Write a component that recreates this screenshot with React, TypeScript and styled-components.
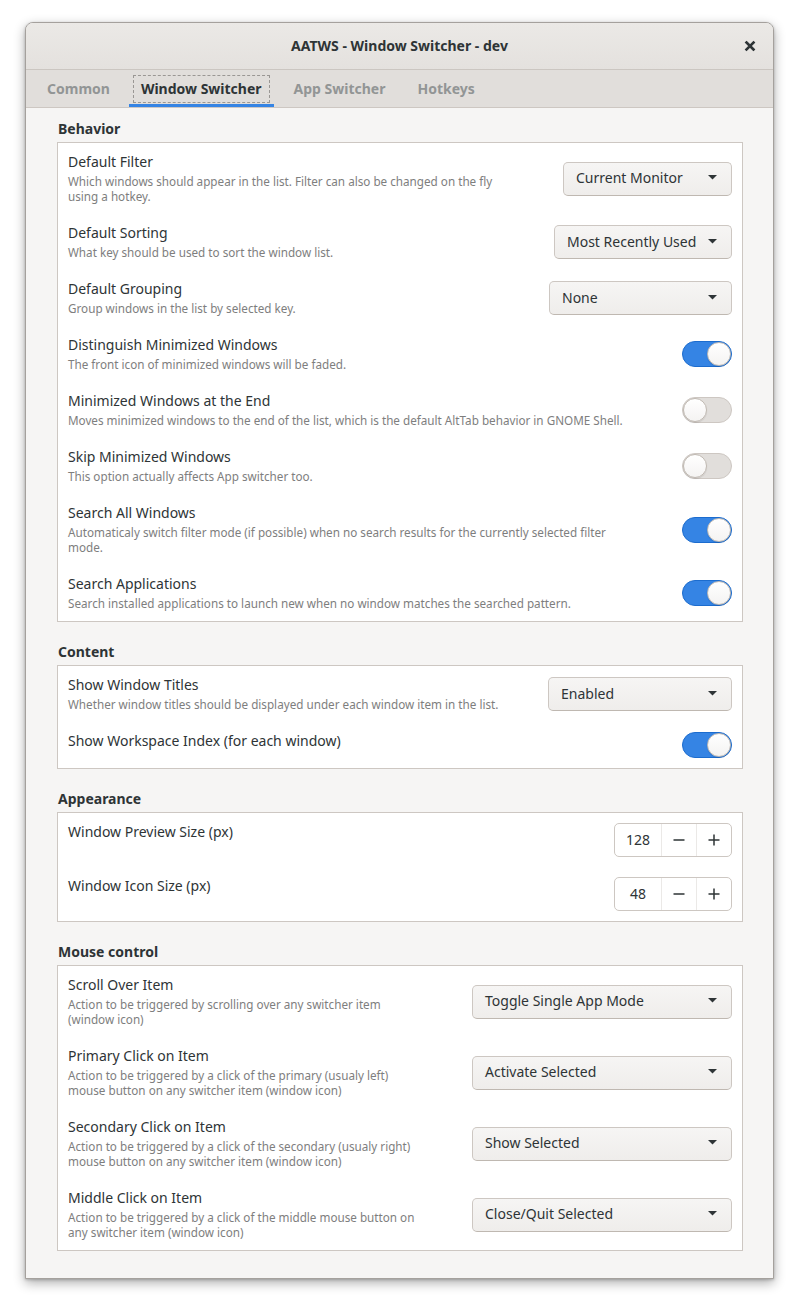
import React from "react";
import styled, { createGlobalStyle, css } from "styled-components";

const GlobalStyle = createGlobalStyle`
  html, body { margin: 0; padding: 0; background: #ffffff; }
  body {
    font-family: "Noto Sans", "Open Sans", sans-serif;
    color: #3d3d3d;
    -webkit-font-smoothing: antialiased;
  }
  #root { padding: 22px 0 30px 25px; }
`;

const Window = styled.div`
  width: 749px;
  box-sizing: border-box;
  border: 1px solid #a5a19d;
  border-radius: 8px 8px 0 0;
  background: #f6f5f4;
  box-shadow: 0 4px 12px rgba(0, 0, 0, 0.32), 0 1px 3px rgba(0, 0, 0, 0.2);
  overflow: hidden;
`;

const TitleBar = styled.header`
  height: 46px;
  border-bottom: 1px solid #cbc6c1;
  background: linear-gradient(to bottom, #ebe9e6, #e4e1de);
  display: flex;
  align-items: center;
  justify-content: center;
  position: relative;
`;

const Title = styled.h1`
  margin: 0 0 2px;
  font-size: 14px;
  font-weight: 700;
  color: #2e3436;
`;

const CloseButton = styled.button`
  position: absolute;
  right: 16px;
  top: 16px;
  width: 14px;
  height: 14px;
  padding: 0;
  border: 0;
  background: none;
  display: flex;
  align-items: center;
  justify-content: center;
`;

const TabBar = styled.nav`
  height: 37px;
  border-bottom: 1px solid #cdc7c2;
  background: #e1dedb;
  display: flex;
  gap: 8px;
  padding-left: 9px;
`;

const Tab = styled.div<{ $active?: boolean }>`
  position: relative;
  height: 37px;
  box-sizing: border-box;
  padding: 0 12px 1px;
  display: flex;
  align-items: center;
  font-size: 14px;
  font-weight: 700;
  color: ${(p) => (p.$active ? "#2e3436" : "#929595")};
  ${(p) =>
    p.$active &&
    css`
      margin-left: -1px;
      box-shadow: inset 0 -3px 0 #3584e4;
    `}
`;

const FocusRing = styled.span`
  position: absolute;
  left: 4px;
  right: 4px;
  top: 5px;
  bottom: 4px;
  border: 1px dashed #9a9794;
  pointer-events: none;
`;

const Content = styled.main`
  padding: 11px 30px 27px 31px;
  display: flex;
  flex-direction: column;
  gap: 20px;
`;

const Section = styled.section`
  display: flex;
  flex-direction: column;
  gap: 5px;
`;

const SectionTitle = styled.h2`
  margin: 0;
  font-size: 14px;
  line-height: 18px;
  font-weight: 700;
  color: #2e3436;
  padding: 1px 0 0 1px;
  margin-bottom: -1px;
`;

const Frame = styled.div`
  background: #ffffff;
  border: 1px solid #cdc7c2;
`;

const Row = styled.div`
  display: flex;
  align-items: center;
  padding: 10px 10px;
  gap: 16px;
`;

const TextCol = styled.div`
  flex: 1;
  align-self: flex-start;
  display: flex;
  flex-direction: column;
  gap: 3px;
`;

const RowTitle = styled.div`
  font-size: 14px;
  line-height: 18px;
  color: #2e3436;
`;

const RowDesc = styled.div`
  font-size: 11.7px;
  line-height: 15px;
  color: #7e7e7e;
  white-space: pre-line;
`;

const Combo = styled.div<{ $w: number }>`
  width: ${(p) => p.$w}px;
  height: 34px;
  box-sizing: border-box;
  flex-shrink: 0;
  border: 1px solid #cdc7c2;
  border-bottom-color: #bfb8b1;
  border-radius: 5px;
  background: linear-gradient(to bottom, #f6f5f4, #efedeb);
  display: flex;
  align-items: center;
  justify-content: space-between;
  padding: 0 14px 2px 12px;
  font-size: 14px;
  color: #2e3436;
  white-space: nowrap;
`;

const SwitchTrack = styled.div<{ $on: boolean }>`
  width: 50px;
  height: 26px;
  box-sizing: border-box;
  flex-shrink: 0;
  border-radius: 13px;
  border: 1px solid ${(p) => (p.$on ? "#1c6cce" : "#cdc7c2")};
  background: ${(p) => (p.$on ? "#3584e4" : "#e1dedb")};
  display: flex;
  align-items: center;
  justify-content: ${(p) => (p.$on ? "flex-end" : "flex-start")};
`;

const SwitchKnob = styled.div`
  width: 24px;
  height: 24px;
  box-sizing: border-box;
  border-radius: 50%;
  background: linear-gradient(to bottom, #ffffff, #f4f3f2);
  border: 1px solid #c0b9b2;
  box-shadow: 0 1px 1px rgba(0, 0, 0, 0.1);
`;

const Spin = styled.div`
  height: 34px;
  box-sizing: border-box;
  flex-shrink: 0;
  border: 1px solid #cdc7c2;
  border-radius: 5px;
  background: #ffffff;
  display: flex;
  overflow: hidden;
`;

const SpinValue = styled.div`
  width: 46px;
  display: flex;
  align-items: center;
  justify-content: center;
  padding-bottom: 1px;
  font-size: 14px;
  color: #2e3436;
`;

const SpinButton = styled.div`
  width: 35px;
  box-sizing: border-box;
  border-left: 1px solid #ebe9e7;
  display: flex;
  align-items: center;
  justify-content: center;
`;

const Arrow = () => (
  <svg width="9" height="5" viewBox="0 0 9 5">
    <path d="M0 0 L9 0 L4.5 4.5 Z" fill="#2e3436" />
  </svg>
);

const Minus = () => (
  <svg width="12" height="12" viewBox="0 0 12 12">
    <rect x="0.5" y="5.25" width="11" height="1.5" fill="#2e3436" />
  </svg>
);

const Plus = () => (
  <svg width="12" height="12" viewBox="0 0 12 12">
    <rect x="0.5" y="5.25" width="11" height="1.5" fill="#2e3436" />
    <rect x="5.25" y="0.5" width="1.5" height="11" fill="#2e3436" />
  </svg>
);

const CloseIcon = () => (
  <svg width="12" height="12" viewBox="0 0 12 12">
    <path
      d="M2.5 2.5 L9.5 9.5 M9.5 2.5 L2.5 9.5"
      stroke="#2e3436"
      strokeWidth="2.6"
      strokeLinecap="square"
    />
  </svg>
);

type Control =
  | { kind: "combo"; value: string; width: number }
  | { kind: "switch"; on: boolean }
  | { kind: "spin"; value: number };

type Item = { title: string; desc?: string; control: Control };

const sections: { name: string; items: Item[] }[] = [
  {
    name: "Behavior",
    items: [
      {
        title: "Default Filter",
        desc: "Which windows should appear in the list. Filter can also be changed on the fly\nusing a hotkey.",
        control: { kind: "combo", value: "Current Monitor", width: 169 },
      },
      {
        title: "Default Sorting",
        desc: "What key should be used to sort the window list.",
        control: { kind: "combo", value: "Most Recently Used", width: 178 },
      },
      {
        title: "Default Grouping",
        desc: "Group windows in the list by selected key.",
        control: { kind: "combo", value: "None", width: 183 },
      },
      {
        title: "Distinguish Minimized Windows",
        desc: "The front icon of minimized windows will be faded.",
        control: { kind: "switch", on: true },
      },
      {
        title: "Minimized Windows at the End",
        desc: "Moves minimized windows to the end of the list, which is the default AltTab behavior in GNOME Shell.",
        control: { kind: "switch", on: false },
      },
      {
        title: "Skip Minimized Windows",
        desc: "This option actually affects App switcher too.",
        control: { kind: "switch", on: false },
      },
      {
        title: "Search All Windows",
        desc: "Automaticaly switch filter mode (if possible) when no search results for the currently selected filter\nmode.",
        control: { kind: "switch", on: true },
      },
      {
        title: "Search Applications",
        desc: "Search installed applications to launch new when no window matches the searched pattern.",
        control: { kind: "switch", on: true },
      },
    ],
  },
  {
    name: "Content",
    items: [
      {
        title: "Show Window Titles",
        desc: "Whether window titles should be displayed under each window item in the list.",
        control: { kind: "combo", value: "Enabled", width: 184 },
      },
      {
        title: "Show Workspace Index (for each window)",
        control: { kind: "switch", on: true },
      },
    ],
  },
  {
    name: "Appearance",
    items: [
      { title: "Window Preview Size (px)", control: { kind: "spin", value: 128 } },
      { title: "Window Icon Size (px)", control: { kind: "spin", value: 48 } },
    ],
  },
  {
    name: "Mouse control",
    items: [
      {
        title: "Scroll Over Item",
        desc: "Action to be triggered by scrolling over any switcher item\n(window icon)",
        control: { kind: "combo", value: "Toggle Single App Mode", width: 260 },
      },
      {
        title: "Primary Click on Item",
        desc: "Action to be triggered by a click of the primary (usualy left)\nmouse button on any switcher item (window icon)",
        control: { kind: "combo", value: "Activate Selected", width: 260 },
      },
      {
        title: "Secondary Click on Item",
        desc: "Action to be triggered by a click of the secondary (usualy right)\nmouse button on any switcher item (window icon)",
        control: { kind: "combo", value: "Show Selected", width: 260 },
      },
      {
        title: "Middle Click on Item",
        desc: "Action to be triggered by a click of the middle mouse button on\nany switcher item (window icon)",
        control: { kind: "combo", value: "Close/Quit Selected", width: 260 },
      },
    ],
  },
];

const renderControl = (c: Control) => {
  if (c.kind === "combo")
    return (
      <Combo $w={c.width}>
        <span>{c.value}</span>
        <Arrow />
      </Combo>
    );
  if (c.kind === "switch")
    return (
      <SwitchTrack $on={c.on}>
        <SwitchKnob />
      </SwitchTrack>
    );
  return (
    <Spin>
      <SpinValue>{c.value}</SpinValue>
      <SpinButton>
        <Minus />
      </SpinButton>
      <SpinButton>
        <Plus />
      </SpinButton>
    </Spin>
  );
};

const tabs = ["Common", "Window Switcher", "App Switcher", "Hotkeys"];

export default function App() {
  return (
    <>
      <GlobalStyle />
      <Window>
        <TitleBar>
          <Title>AATWS - Window Switcher - dev</Title>
          <CloseButton aria-label="Close">
            <CloseIcon />
          </CloseButton>
        </TitleBar>
        <TabBar>
          {tabs.map((t) => (
            <Tab key={t} $active={t === "Window Switcher"}>
              {t}
              {t === "Window Switcher" && <FocusRing />}
            </Tab>
          ))}
        </TabBar>
        <Content>
          {sections.map((s) => (
            <Section key={s.name}>
              <SectionTitle>{s.name}</SectionTitle>
              <Frame>
                {s.items.map((it) => (
                  <Row key={it.title}>
                    <TextCol>
                      <RowTitle>{it.title}</RowTitle>
                      {it.desc && <RowDesc>{it.desc}</RowDesc>}
                    </TextCol>
                    {renderControl(it.control)}
                  </Row>
                ))}
              </Frame>
            </Section>
          ))}
        </Content>
      </Window>
    </>
  );
}
